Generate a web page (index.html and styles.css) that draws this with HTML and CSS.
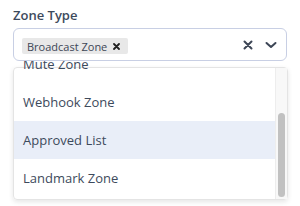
FILE: index.html
```html
<!DOCTYPE html>
<html>
<head>
<meta charset="utf-8">
<link rel="stylesheet" href="styles.css">
</head>
<body>
<div class="field">
  <div class="label">Zone Type</div>
  <div class="select">
    <div class="values">
      <span class="chip">Broadcast Zone <svg class="chip-x" width="7" height="7" viewBox="0 0 7 7"><path d="M1 1 L6 6 M6 1 L1 6" stroke="#1f1f1f" stroke-width="1.8" stroke-linecap="round"/></svg></span>
    </div>
    <div class="indicators">
      <svg class="clear" width="10" height="10" viewBox="0 0 10 10"><path d="M1.5 1.5 L8.5 8.5 M8.5 1.5 L1.5 8.5" stroke="#3d4656" stroke-width="2" stroke-linecap="round"/></svg>
      <svg class="chev" width="12" height="8" viewBox="0 0 12 8"><path d="M1.5 2 L6 6 L10.5 2" fill="none" stroke="#3d4656" stroke-width="2" stroke-linecap="round" stroke-linejoin="round"/></svg>
    </div>
  </div>
  <div class="menu">
    <ul class="options">
      <li class="option">Mute Zone</li>
      <li class="option">Webhook Zone</li>
      <li class="option active">Approved List</li>
      <li class="option">Landmark Zone</li>
    </ul>
    <div class="scrollbar"><div class="thumb"></div></div>
  </div>
</div>
</body>
</html>
```
FILE: styles.css
```css
html, body {
  margin: 0;
  padding: 0;
  background: #ffffff;
}
body {
  font-family: "Open Sans", "Noto Sans", sans-serif;
  color: #3d4a5c;
  width: 300px;
  height: 206px;
  overflow: hidden;
}
.field {
  position: relative;
  padding: 6px 13px 0 13px;
}
.label {
  font-size: 13px;
  line-height: 18px;
  font-weight: 600;
  color: #3d4a5c;
  margin-bottom: 4px;
}
.select {
  position: relative;
  z-index: 2;
  box-sizing: border-box;
  height: 33px;
  width: 274px;
  border: 1px solid #c8cfe4;
  border-radius: 6px;
  background: #ffffff;
  display: flex;
  align-items: center;
  justify-content: space-between;
  padding: 0 0 0 8px;
}
.chip {
  display: inline-flex;
  align-items: center;
  height: 16px;
  background: #e8e8e8;
  border-radius: 2px;
  padding: 0 8px 0 5px;
  font-size: 11px;
  color: #3d4656;
  white-space: nowrap;
}
.chip-x {
  display: block;
  margin-left: 6px;
}
.indicators {
  display: flex;
  align-items: center;
  gap: 12px;
  padding-right: 9px;
}
.clear, .chev {
  display: block;
}
.menu {
  position: absolute;
  top: 67px;
  left: 13px;
  width: 275px;
  height: 133px;
  box-sizing: border-box;
  border: 1px solid #e4e4e4;
  border-radius: 4px;
  background: transparent;
  box-shadow: 0 2px 5px rgba(0, 0, 0, 0.10);
}
.options {
  list-style: none;
  margin: -23px 12px 0 0;
  padding: 0;
}
.option {
  height: 38px;
  line-height: 38px;
  padding-left: 9px;
  font-size: 13px;
  color: #3d4a5c;
}
.option.active {
  background: #e9eef8;
}
.scrollbar {
  position: absolute;
  top: 0;
  right: 0;
  bottom: 0;
  width: 11px;
  background: #f8f8f8;
  border-left: 1px solid #ededed;
}
.thumb {
  position: absolute;
  left: 2px;
  right: 2px;
  top: 45px;
  bottom: 2px;
  background: #c1c1c1;
  border-radius: 4px;
}
```
